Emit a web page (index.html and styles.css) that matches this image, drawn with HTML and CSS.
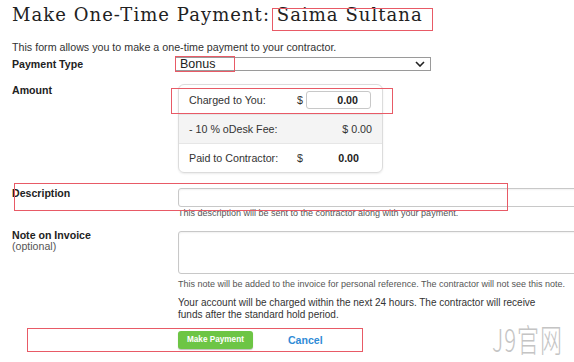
FILE: index.html
```html
<!DOCTYPE html>
<html>
<head>
<meta charset="utf-8">
<link rel="stylesheet" href="styles.css">
</head>
<body>
<div class="page">
  <h1 class="title">Make One-Time Payment: <span class="name">Saima Sultana</span></h1>
  <p class="intro">This form allows you to make a one-time payment to your contractor.</p>

  <div class="row row-type">
    <div class="label">Payment Type</div>
    <div class="field">
      <div class="select"><span class="select-val">Bonus</span>
        <svg class="chev" width="10" height="6" viewBox="0 0 10 6"><path d="M1 1 L5 5 L9 1" fill="none" stroke="#222" stroke-width="1.6"/></svg>
      </div>
    </div>
  </div>

  <div class="row row-amount">
    <div class="label">Amount</div>
    <div class="field">
      <div class="amount-box">
        <div class="arow">
          <span class="aname">Charged to You:</span>
          <span class="dollar">$</span>
          <span class="ainput">0.00</span>
        </div>
        <div class="arow grey">
          <span class="aname">- 10 % oDesk Fee:</span>
          <span class="fee">$ 0.00</span>
        </div>
        <div class="arow">
          <span class="aname">Paid to Contractor:</span>
          <span class="dollar">$</span>
          <span class="aval">0.00</span>
        </div>
      </div>
    </div>
  </div>

  <div class="row row-desc">
    <div class="label">Description</div>
    <div class="field">
      <div class="input"></div>
      <div class="help">This description will be sent to the contractor along with your payment.</div>
    </div>
  </div>

  <div class="row row-note">
    <div class="label">Note on Invoice<div class="sub">(optional)</div></div>
    <div class="field">
      <div class="textarea"></div>
      <div class="help">This note will be added to the invoice for personal reference. The contractor will not see this note.</div>
      <p class="notice">Your account will be charged within the next 24 hours. The contractor will receive funds after the standard hold period.</p>
      <div class="actions">
        <span class="btn">Make Payment</span>
        <span class="cancel">Cancel</span>
      </div>
    </div>
  </div>

  <div class="mark m-name"></div>
  <div class="mark m-bonus"></div>
  <div class="mark m-charged"></div>
  <div class="mark m-desc"></div>
  <div class="mark m-actions"></div>
  <div class="watermark">J9官网</div>
</div>
</body>
</html>
```

FILE: styles.css
```css
* { box-sizing: border-box; }
html, body { margin: 0; padding: 0; background: #fff; }
body { font-family: "Liberation Sans", Arial, sans-serif; color: #333; font-size: 10.7px; width: 574px; height: 362px; overflow: hidden; }
.page { position: relative; padding: 0 0 0 12px; height: 362px; }

.title { font-family: "DejaVu Serif", serif; font-weight: normal; font-size: 18px; line-height: 22px; margin: 0; padding-top: 4px; color: #222; letter-spacing: 1.05px; white-space: nowrap; }
.intro { margin: 15px 0 0; font-size: 10.7px; line-height: 12px; color: #333; white-space: nowrap; }

.row { display: grid; grid-template-columns: 166px 1fr; }
.label { font-weight: bold; font-size: 10.6px; line-height: 12px; color: #222; }
.sub { font-weight: normal; color: #555; line-height: 11px; }

.row-type { margin-top: 4px; align-items: center; }
.select { width: 256px; margin-left: -3px; height: 14px; border: 1px solid #9a9a9a; display: flex; align-items: center; justify-content: space-between; padding: 0 5px 0 4px; }
.select-val { font-size: 12.5px; line-height: 12px; color: #222; }

.row-amount { margin-top: 13px; }
.amount-box { width: 205px; border: 1px solid #dcdcdc; border-radius: 6px; overflow: hidden; box-shadow: 0 1px 2px rgba(0,0,0,0.08); }
.arow { display: flex; align-items: center; height: 29px; padding: 0 10px; }
.arow + .arow { border-top: 1px solid #e6e6e6; }
.arow.grey { background: #f4f4f4; }
.aname { width: 108px; color: #333; white-space: nowrap; }
.dollar { width: 9px; color: #333; }
.ainput { width: 65px; height: 18px; border: 1px solid #c8c8c8; border-radius: 3px; text-align: right; font-weight: bold; padding: 2px 12px 0 0; color: #222; line-height: 13px; }
.aval { width: 53px; text-align: right; font-weight: bold; color: #222; }
.fee { margin-left: auto; }

.row-desc { margin-top: 15px; }
.row-desc .label { margin-top: -1px; }
.input { height: 19px; border: 1px solid #c8c8c8; border-radius: 3px; width: 420px; box-shadow: inset 0 1px 2px rgba(0,0,0,0.06); }
.help { font-size: 9px; line-height: 10px; color: #555; margin-top: 1px; white-space: nowrap; }

.row-note { margin-top: 13px; }
.row-note .label { margin-top: -2px; }
.textarea { height: 43px; border: 1px solid #c8c8c8; border-radius: 3px; width: 420px; box-shadow: inset 0 1px 2px rgba(0,0,0,0.06); }
.row-note .help { margin-top: 5px; }
.notice { margin: 8px 0 0; width: 370px; font-size: 10px; line-height: 12px; color: #333; }
.actions { margin-top: 10px; display: flex; align-items: center; gap: 35px; }
.btn { display: inline-block; background: #6dc545; color: #fff; font-weight: bold; font-size: 8.2px; border-radius: 3px; padding: 0 9px; height: 18px; line-height: 18px; box-shadow: 0 1px 1px rgba(0,0,0,0.25); }
.cancel { color: #2f8bd6; font-weight: bold; font-size: 10.6px; }

.mark { position: absolute; border: 1px solid #e85a66; }
.m-name { left: 272px; top: 8px; width: 161px; height: 23px; }
.m-bonus { left: 175px; top: 56px; width: 60px; height: 16px; }
.m-charged { left: 171px; top: 88px; width: 222px; height: 26px; }
.m-desc { left: 14px; top: 183px; width: 494px; height: 28px; }
.m-actions { left: 27px; top: 328px; width: 336px; height: 24px; }

.watermark { position: absolute; left: 492px; top: 322px; font-family: "Noto Sans CJK SC", sans-serif; font-size: 22px; line-height: 22px; font-weight: 300; color: #c4c4c4; letter-spacing: 1px; transform: scaleY(1.45); transform-origin: top left; }
```
